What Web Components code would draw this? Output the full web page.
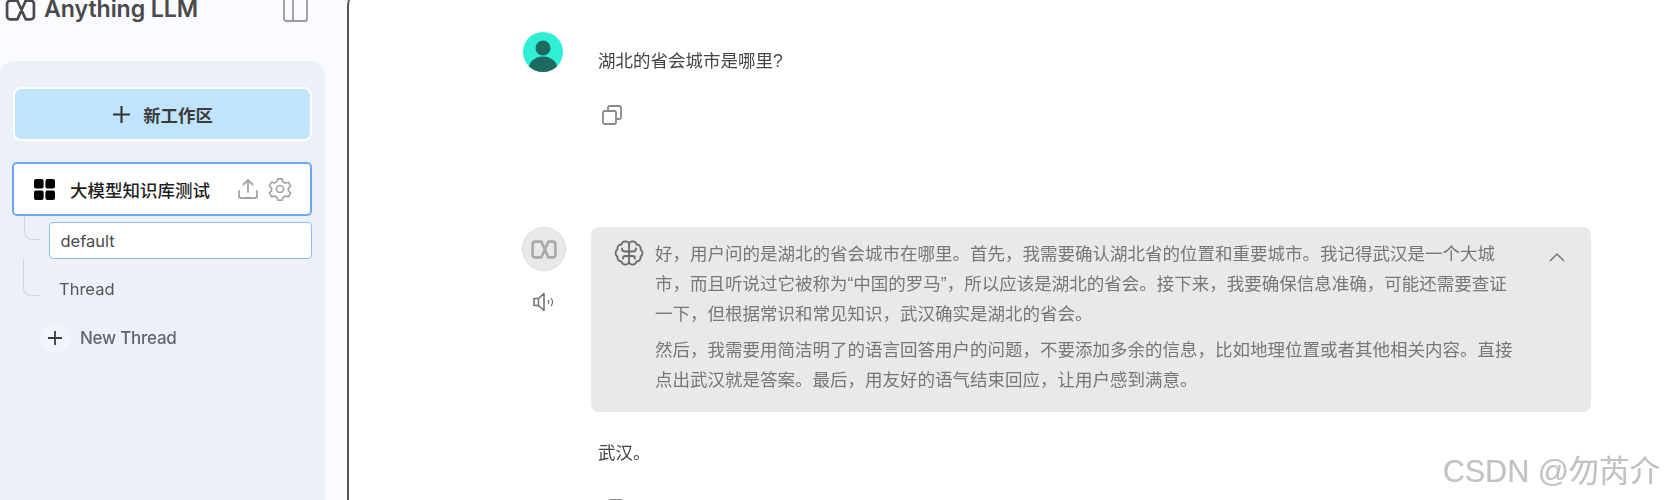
<!DOCTYPE html>
<html lang="en">
<head>
<meta charset="utf-8">
<title>Anything LLM</title>
<style>
html,body{margin:0;padding:0;height:500px;overflow:hidden;background:#fafbfe;}
body{font-family:"Liberation Sans","Noto Sans CJK SC",sans-serif;}
</style>
</head>
<body>
<app-shell>
  <side-bar slot="side">
    <brand-header></brand-header>
    <side-panel>
      <new-workspace>新工作区</new-workspace>
      <workspace-item>大模型知识库测试</workspace-item>
      <thread-item active>default</thread-item>
      <thread-item last>Thread</thread-item>
      <new-thread>New Thread</new-thread>
    </side-panel>
  </side-bar>
  <chat-pane slot="main">
    <user-message>湖北的省会城市是哪里?</user-message>
    <assistant-message>
      <reasoning-box slot="reasoning">
        <p>好，用户问的是湖北的省会城市在哪里。首先，我需要确认湖北省的位置和重要城市。我记得武汉是一个大城市，而且听说过它被称为“中国的罗马”，所以应该是湖北的省会。接下来，我要确保信息准确，可能还需要查证一下，但根据常识和常见知识，武汉确实是湖北的省会。</p>
        <p>然后，我需要用简洁明了的语言回答用户的问题，不要添加多余的信息，比如地理位置或者其他相关内容。直接点出武汉就是答案。最后，用友好的语气结束回应，让用户感到满意。</p>
      </reasoning-box>
      武汉。
    </assistant-message>
  </chat-pane>
  <water-mark slot="over">CSDN @勿芮介</water-mark>
</app-shell>
<script>
const LOGO='M12 3 20 21H25a3 3 0 0 0 3-3V6a3 3 0 0 0-3-3H20L12 21H5a3 3 0 0 1-3-3V6a3 3 0 0 1 3-3Z';
const COPY='<svg width="22" height="22" viewBox="0 0 22 22" fill="none" stroke="#8a8a8a" stroke-width="1.8" stroke-linejoin="round"><rect x="2" y="7" width="13" height="13" rx="1.5"/><path d="M7 7V3.5A1.5 1.5 0 0 1 8.5 2h10A1.5 1.5 0 0 1 20 3.5v10a1.5 1.5 0 0 1-1.5 1.5H15"/></svg>';
function def(name,html){
  customElements.define(name,class extends HTMLElement{
    constructor(){super();this.attachShadow({mode:'open'}).innerHTML=html;}
  });
}
def('app-shell',`<style>:host{display:flex;width:1665px;height:500px;overflow:hidden;position:relative;filter:blur(.4px)}</style>
<slot name="side"></slot><slot name="main"></slot><slot name="over"></slot>`);
def('side-bar',`<style>:host{display:flex;flex-direction:column;width:347px;flex:none;height:500px;background:#fafbfe}</style><slot></slot>`);
def('brand-header',`<style>
:host{display:flex;align-items:center;height:61px;margin-top:-21px;padding:0 39px 0 5px;box-sizing:border-box;flex:none;color:#4a4a4a}
svg.logo{flex:none;margin-right:8px}
span{font:600 23.2px/1 Inter,"Liberation Sans",sans-serif;letter-spacing:-.1px;flex:1}
</style>
<svg class="logo" width="31" height="26" viewBox="0 0 30 24" fill="none" stroke="#4a4a4a" stroke-width="2.6" stroke-linejoin="round"><path d="${LOGO}"/></svg>
<span>Anything LLM</span>
<svg width="25" height="25" viewBox="0 0 25 25" fill="none" stroke="#9a9a9a" stroke-width="1.8"><rect x="1" y="1" width="23" height="23" rx="2"/><path d="M10 1V24"/></svg>`);
def('side-panel',`<style>:host{display:flex;flex-direction:column;margin-right:22px;margin-top:21px;flex:1;background:#ebf0f9;border-radius:14px 14px 0 0;padding:26px 13px 0 12px}</style><slot></slot>`);
def('new-workspace',`<style>
:host{display:flex;align-items:center;justify-content:center;gap:12px;height:54px;box-sizing:border-box;margin-left:1px;border:2px solid #fff;border-radius:8px;background:#c1e4fd;color:#3c3c3c;font:700 17.4px "Liberation Sans","Noto Sans CJK SC",sans-serif}
</style><svg width="19" height="19" viewBox="0 0 18 18" stroke="#333" stroke-width="2"><path d="M9 1V17M1 9H17"/></svg><span><slot></slot></span>`);
def('workspace-item',`<style>
:host{display:flex;align-items:center;height:54px;box-sizing:border-box;margin-top:21px;border:2px solid #6aa9f9;border-radius:5px;background:#fff;padding:0 18px 0 20px;color:#1f1f1f;font:500 17.5px "Liberation Sans","Noto Sans CJK SC",sans-serif}
span{flex:1;margin-left:15px}
.up{margin-right:9px}
</style>
<svg width="21" height="21" viewBox="0 0 21 21" fill="#000"><rect x="0" y="0" width="9.6" height="9.6" rx="2"/><rect x="11.4" y="0" width="9.6" height="9.6" rx="2"/><rect x="0" y="11.4" width="9.6" height="9.6" rx="2"/><rect x="11.4" y="11.4" width="9.6" height="9.6" rx="2"/></svg>
<span><slot></slot></span>
<svg class="up" width="22" height="22" viewBox="0 0 22 22" fill="none" stroke="#a4a4a4" stroke-width="1.8" stroke-linecap="round" stroke-linejoin="round"><path d="M11 14V2M6.5 6.5 11 2l4.500 4.500M2 13v5a2 2 0 0 0 2 2h14a2 2 0 0 0 2-2v-5"/></svg>
<svg width="24" height="24" viewBox="0 0 24 24" fill="none" stroke="#a4a4a4" stroke-width="1.7" stroke-linejoin="round"><circle cx="12" cy="12" r="3.500"/><path d="M9.800 1.800h4.400l.7 3 2.500 1.400 3-.9 2.200 3.800-2.200 2.100v2.800l2.200 2.100-2.200 3.800-3-.9-2.500 1.400-.7 3H9.800l-.7-3-2.500-1.400-3 .9L1.400 15.900l2.200-2.100V11L1.400 8.900l2.200-3.800 3 .9 2.500-1.400z"/></svg>`);
customElements.define('thread-item',class extends HTMLElement{
  constructor(){super();
    this.attachShadow({mode:'open'}).innerHTML=`<style>
    :host{display:flex;align-items:center;position:relative;box-sizing:border-box;font:400 16.5px Inter,"Liberation Sans",sans-serif;color:#555;margin-left:37px}
    :host([active]){height:37px;margin-top:6px;background:#fff;border:1.5px solid #8cbcfb;border-radius:4px;padding-left:10.500px;color:#4a4a4a}
    :host([last]){height:60px;padding-left:10px}
    i{position:absolute;border-left:1.5px solid #d3d5da;border-bottom:1.5px solid #d3d5da;border-radius:0 0 0 8px;width:15px;left:-26px}
    :host([active]) i{top:-7px;height:23px}
    :host([last]) i{top:0;height:36px;left:-26px}
    </style><i></i><slot></slot>`;
  }
});
def('new-thread',`<style>
:host{display:flex;align-items:center;gap:10px;margin-left:28px;margin-top:4px;height:30px;color:#62656b;font:500 17px Inter,"Liberation Sans",sans-serif;letter-spacing:-.25px}
b{display:flex;align-items:center;justify-content:center;width:30px;height:30px;border-radius:50%;background:#f2f5fb}
</style><b><svg width="14" height="14" viewBox="0 0 14 14" stroke="#3c3c3c" stroke-width="1.800"><path d="M7 0V14M0 7H14"/></svg></b><span><slot></slot></span>`);
def('chat-pane',`<style>
:host{display:flex;flex-direction:column;box-sizing:border-box;flex:1;min-width:0;height:540px;margin-top:-10px;background:#fff;border-left:2px solid #555;border-radius:16px 0 0 0;padding:42px 74px 0 174px;overflow:hidden}
</style><slot></slot>`);
def('user-message',`<style>
:host{display:block;color:#444;font:400 17.500px/30px "Liberation Sans","Noto Sans CJK SC",sans-serif;height:195px;flex:none}
.row{display:flex;gap:35px}
.ava{flex:none;width:40px;height:40px}
.txt{padding-top:14px}
.copy{margin:28px 0 0 78px;height:22px}
</style>
<div class="row"><svg class="ava" viewBox="0 0 40 40"><defs><clipPath id="c"><circle cx="20" cy="20" r="20"/></clipPath></defs><circle cx="20" cy="20" r="20" fill="#2ff0d4"/><g clip-path="url(#c)" fill="#1d6a60"><circle cx="20" cy="16" r="7.500"/><ellipse cx="20" cy="36" rx="14" ry="11.500"/></g></svg><div class="txt"><slot></slot></div></div>
<div class="copy">${COPY}</div>`);
def('assistant-message',`<style>
:host{display:flex;gap:25px;flex:none;color:#444;font:400 17.500px/30px "Liberation Sans","Noto Sans CJK SC",sans-serif}
.left{flex:none;width:44px;display:flex;flex-direction:column;align-items:center;margin-left:-1px}
.ava{width:44px;height:44px;box-sizing:border-box;border-radius:50%;background:#e9e9e9;border:1px solid #dcdcdc;display:flex;align-items:center;justify-content:center}
.spk{margin-top:21px}
.right{flex:1;min-width:0}
.ans{padding:26px 0 0 7px}
.copy{margin:30px 0 0 11px}
</style>
<div class="left">
<div class="ava"><svg width="28" height="21" viewBox="0 0 30 24" fill="none" stroke="#a9a9a9" stroke-width="3" stroke-linejoin="round"><path d="${LOGO}"/></svg></div>
<svg class="spk" width="22" height="20" viewBox="0 0 22 20" fill="none" stroke="#6f6f6f" stroke-width="1.500" stroke-linejoin="round"><path d="M1 6.500H5.500L11 1.500V18.500L5.500 13.500H1ZM5.500 6.500V13.500"/><path d="M15 8a3 3 0 0 1 0 4M18 6a6.500 6.500 0 0 1 0 8" stroke-width="1.200"/></svg>
</div>
<div class="right"><slot name="reasoning"></slot><div class="ans"><slot></slot></div><div class="copy">${COPY}</div></div>`);
def('reasoning-box',`<style>
:host{display:flex;height:185px;box-sizing:border-box;background:#e9e9e9;border-radius:8px;padding:12px 26px 0 23px;color:#777;font:400 17.500px/30.100px "Liberation Sans","Noto Sans CJK SC",sans-serif}
.brain{flex:none;margin:1px 11px 0 0}
.t{width:860px;flex:none}
::slotted(p){margin:0 0 6px}
.chev{flex:none;margin:13px 0 0 auto}
</style>
<svg class="brain" width="30" height="26" viewBox="0 0 30 26" fill="none" stroke="#6c6c6c" stroke-width="1.800" stroke-linecap="round" stroke-linejoin="round"><path d="M15 4.500C15 2.500 13 1 11 1.500 9 1.500 7.500 3 7.500 4.500 4.500 4.500 3 7 3.500 9.500 1 11 .800 15 3.500 16.500 3 19.500 5 21.500 7.500 21.500 8 24 10.500 25 12.500 24.500 14 24 15 23 15 21.500ZM15 4.500C15 2.500 17 1 19 1.500 21 1.500 22.500 3 22.500 4.500 25.500 4.500 27 7 26.500 9.500 29 11 29.200 15 26.500 16.500 27 19.500 25 21.500 22.500 21.500 22 24 19.500 25 17.500 24.500 16 24 15 23 15 21.500Z"/><path d="M15 11.500H11C9 11.500 8 10 8 8.500M15 11.500H19C21 11.500 22 10 22 8.500M15 16H11.500C10 16 9 17 9 18.500M15 16H18.500C20 16 21 17 21 18.500"/></svg>
<div class="t"><slot></slot></div>
<svg class="chev" width="16" height="10" viewBox="0 0 16 10" fill="none" stroke="#777" stroke-width="1.500"><path d="M1 9 8 2l7 7"/></svg>`);
def('water-mark',`<style>
:host{position:absolute;left:1443px;top:453px;font:400 30.500px/36px "Liberation Sans","Noto Sans CJK SC",sans-serif;color:#c2c2c2;text-shadow:1px 1px 0 #fff,-.5px -.5px 0 #dcdcdc;white-space:nowrap}
</style><slot></slot>`);
</script>
</body>
</html>
